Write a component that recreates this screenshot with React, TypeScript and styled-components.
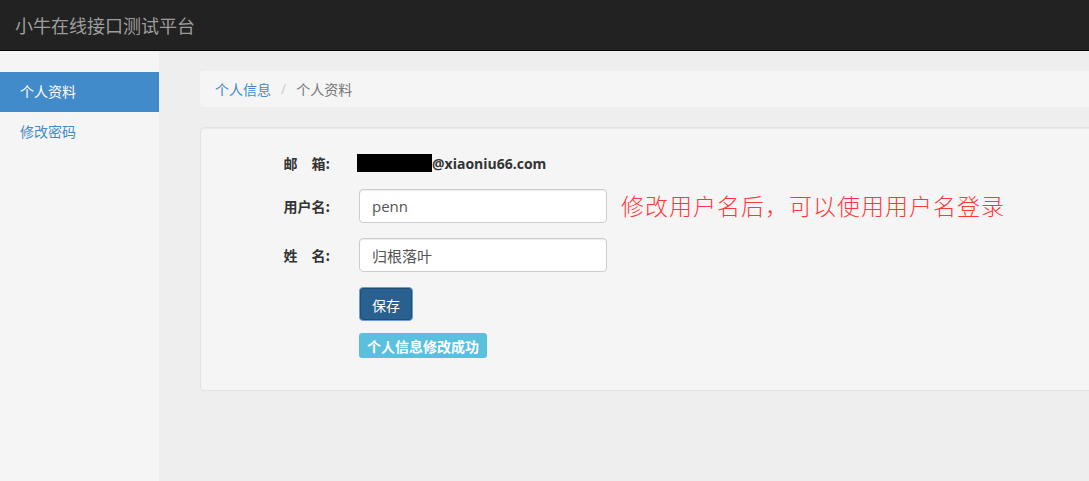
import React from "react";
import styled, { createGlobalStyle } from "styled-components";

const Global = createGlobalStyle`
  html, body { margin: 0; padding: 0; }
  body {
    font-family: "Open Sans", "Noto Sans CJK SC", sans-serif;
    font-size: 14px;
    color: #333;
    background: #eee;
  }
  * { box-sizing: border-box; }
`;

const Page = styled.div`
  display: flex;
  flex-direction: column;
  height: 481px;
  overflow: hidden;
`;

const Navbar = styled.header`
  height: 51px;
  flex: none;
  background: #222;
  border-bottom: 1px solid #080808;
  display: flex;
  align-items: center;
  padding: 0 15px;
`;

const Brand = styled.div`
  font-family: "Noto Sans CJK SC", sans-serif;
  font-size: 18px;
  color: #9d9d9d;
  line-height: 20px;
  margin-top: -1px;
`;

const Body = styled.div`
  flex: 1;
  display: flex;
  min-height: 0;
`;

const Sidebar = styled.nav`
  width: 159px;
  flex: none;
  background: #f5f5f5;
  padding-top: 21px;
  display: flex;
  flex-direction: column;
`;

const NavItem = styled.a<{ $active?: boolean }>`
  display: block;
  height: 40px;
  line-height: 39px;
  padding: 0 20px;
  font-family: "Noto Sans CJK SC", sans-serif;
  font-size: 14px;
  text-decoration: none;
  color: ${(p) => (p.$active ? "#fff" : "#428bca")};
  background: ${(p) => (p.$active ? "#428bca" : "transparent")};
`;

const Main = styled.main`
  flex: 1;
  background: #eee;
  padding: 20px 0 0 41px;
  overflow: hidden;
`;

const Breadcrumb = styled.ol`
  list-style: none;
  margin: 0 -10px 20px 0;
  padding: 8px 15px;
  height: 36px;
  background: #f5f5f5;
  border-radius: 4px;
  display: flex;
  align-items: center;
  font-family: "Noto Sans CJK SC", sans-serif;
  font-size: 14px;
  line-height: 20px;
`;

const Crumb = styled.li<{ $active?: boolean }>`
  color: ${(p) => (p.$active ? "#777" : "#428bca")};
`;

const Sep = styled.li`
  color: #ccc;
  padding: 0 10px;
  font-family: "Open Sans", sans-serif;
`;

const Well = styled.section`
  margin: 0 -10px 0 0;
  height: 264px;
  background: #f5f5f5;
  border: 1px solid #e3e3e3;
  border-radius: 4px;
  box-shadow: inset 0 1px 1px rgba(0, 0, 0, 0.05);
  padding: 19px 20px;
`;

const Form = styled.div`
  display: grid;
  grid-template-columns: 109px auto;
  column-gap: 29px;
  row-gap: 15px;
  align-items: center;
`;

const Label = styled.label<{ $shift?: boolean }>`
  text-align: right;
  font-family: "Noto Sans CJK SC", sans-serif;
  font-weight: 700;
  font-size: 14px;
  color: #333;
  line-height: 20px;
  padding-top: ${(p) => (p.$shift ? "5px" : "0")};
`;

const Static = styled.div`
  display: flex;
  align-items: center;
  height: 27px;
  padding-top: 5px;
  margin-left: -2px;
  font-family: "Open Sans", sans-serif;
  font-weight: 700;
  font-size: 14px;
  color: #333;
`;

const Redact = styled.span`
  display: inline-block;
  width: 75px;
  height: 18px;
  background: #000;
`;

const FieldRow = styled.div`
  display: flex;
  align-items: center;
  gap: 14px;
`;

const Input = styled.div`
  width: 248px;
  height: 34px;
  border: 1px solid #ccc;
  border-radius: 4px;
  background: #fff;
  padding: 0 12px;
  display: flex;
  align-items: center;
  font-family: "Open Sans", "Noto Sans CJK SC", sans-serif;
  font-size: 15px;
  color: #555;
  box-shadow: inset 0 1px 1px rgba(0, 0, 0, 0.075);
`;

const Hint = styled.span`
  font-family: "Noto Sans CJK SC", sans-serif;
  font-weight: 300;
  font-size: 23px;
  letter-spacing: 1px;
  color: #ff3838;
  line-height: 30px;
  margin-top: -2px;
`;

const Actions = styled.div`
  grid-column: 2;
  display: flex;
  flex-direction: column;
  align-items: flex-start;
  gap: 12px;
`;

const Button = styled.button`
  width: 54px;
  height: 34px;
  border: 1px solid #6d9ee0;
  border-radius: 4px;
  background: #286090;
  box-shadow: inset 0 0 0 1px #204d74;
  color: #fff;
  font-family: "Noto Sans CJK SC", sans-serif;
  font-size: 14px;
  padding: 1px 0 0;
`;

const Badge = styled.span`
  display: inline-flex;
  align-items: center;
  height: 25px;
  padding: 0 8px;
  border-radius: 3px;
  background: #5bc0de;
  color: #fff;
  font-family: "Noto Sans CJK SC", sans-serif;
  font-weight: 700;
  font-size: 14px;
`;

export default function App() {
  return (
    <Page>
      <Global />
      <Navbar>
        <Brand>小牛在线接口测试平台</Brand>
      </Navbar>
      <Body>
        <Sidebar>
          <NavItem $active>个人资料</NavItem>
          <NavItem>修改密码</NavItem>
        </Sidebar>
        <Main>
          <Breadcrumb>
            <Crumb>个人信息</Crumb>
            <Sep>/</Sep>
            <Crumb $active>个人资料</Crumb>
          </Breadcrumb>
          <Well>
            <Form>
              <Label $shift>邮{"\u3000"}箱:</Label>
              <Static>
                <Redact />
                @xiaoniu66.com
              </Static>
              <Label>用户名:</Label>
              <FieldRow>
                <Input>penn</Input>
                <Hint>修改用户名后，可以使用用户名登录</Hint>
              </FieldRow>
              <Label>姓{"\u3000"}名:</Label>
              <FieldRow>
                <Input>归根落叶</Input>
              </FieldRow>
              <Actions>
                <Button>保存</Button>
                <Badge>个人信息修改成功</Badge>
              </Actions>
            </Form>
          </Well>
        </Main>
      </Body>
    </Page>
  );
}
